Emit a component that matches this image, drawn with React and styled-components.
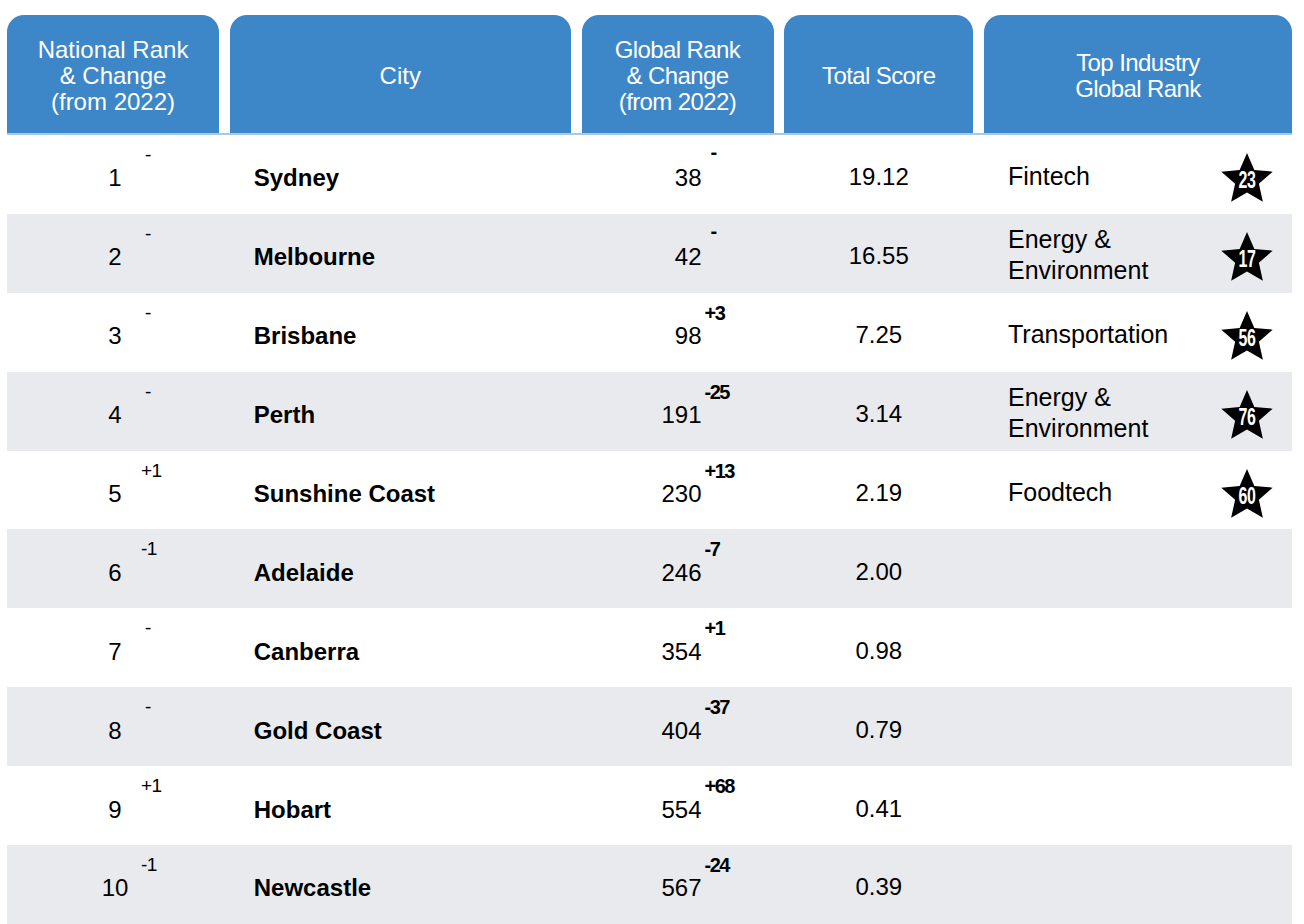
import React from "react";
import styled, { createGlobalStyle } from "styled-components";

const GlobalStyle = createGlobalStyle`
  body {
    margin: 0;
    padding: 15px 12px 0 7px;
    background: #fff;
    font-family: "Liberation Sans", Arial, sans-serif;
    color: #000;
  }
`;

const cols = "212px 341px 192px 189px 308px";

const Table = styled.div`
  width: 1285px;
`;
const HeadRow = styled.div`
  display: grid;
  grid-template-columns: ${cols};
  column-gap: 10.75px;
  border-bottom: 2px solid #a9c8e6;
`;
const HeadCell = styled.div`
  background: #3d86c8;
  color: #fff;
  height: 118px;
  border-radius: 17px 17px 0 0;
  display: flex;
  align-items: center;
  justify-content: center;
  text-align: center;
  font-size: 24px;
  line-height: 26px;
  letter-spacing: ${(p) => (p.tight ? "-0.6px" : "0")};
  padding-top: 4px;
  box-sizing: border-box;
`;
const Row = styled.div`
  display: grid;
  grid-template-columns: ${cols};
  column-gap: 10.75px;
  height: 78.9px;
  background: ${(p) => (p.shade ? "#e8eaee" : "#fff")};
`;
const Cell = styled.div`
  display: flex;
  align-items: center;
  font-size: 24px;
  position: relative;
`;
const RankCell = styled(Cell)`
  padding-left: 86px;
`;
const RankNum = styled.span`
  width: 44px;
  text-align: center;
  padding-top: 8px;
`;
const Sup = styled.span`
  align-self: flex-start;
  margin-top: ${(p) => (p.dash ? 6 : 9)}px;
  margin-left: ${(p) => p.gap || 6}px;
  font-size: ${(p) => (p.bold ? 20 : 19)}px;
  font-weight: ${(p) => (p.bold ? 700 : 400)};
  letter-spacing: ${(p) => (p.bold ? "-1.5px" : "-0.5px")};
`;
const City = styled(Cell)`
  padding-left: 24px;
  padding-top: 8px;
  font-weight: 700;
`;
const GlobalCell = styled(Cell)`
  padding-left: 36px;
`;
const GlobalNum = styled.span`
  width: 84px;
  text-align: right;
  padding-top: 8px;
`;
const Score = styled(Cell)`
  justify-content: center;
  padding-top: 6px;
`;
const Industry = styled(Cell)`
  justify-content: space-between;
  padding-left: 24px;
  padding-right: 18px;
  padding-top: 4px;
  font-size: 25px;
  line-height: 31px;
`;
const StarWrap = styled.div`
  position: relative;
  width: 54px;
  height: 52px;
  flex-shrink: 0;
  margin-top: 2px;
`;
const StarNum = styled.span`
  position: absolute;
  inset: 0;
  display: flex;
  align-items: center;
  justify-content: center;
  padding-top: 5px;
  color: #fff;
  font-weight: 700;
  font-size: 21px;
  letter-spacing: -0.5px;
  transform: scale(0.76, 1.12);
`;

const starPoints = (() => {
  const pts = [];
  for (let i = 0; i < 10; i++) {
    const r = i % 2 === 0 ? 27 : 12.5;
    const a = (Math.PI / 5) * i - Math.PI / 2;
    pts.push(`${(27 + r * Math.cos(a)).toFixed(2)},${(29 + r * Math.sin(a)).toFixed(2)}`);
  }
  return pts.join(" ");
})();

const Star = ({ n }) => (
  <StarWrap>
    <svg width="54" height="52" viewBox="0 0 54 52">
      <polygon points={starPoints} fill="#000" />
    </svg>
    <StarNum>{n}</StarNum>
  </StarWrap>
);

const data = [
  ["1", "-", "Sydney", "38", "-", "19.12", "Fintech", "23"],
  ["2", "-", "Melbourne", "42", "-", "16.55", "Energy &\nEnvironment", "17"],
  ["3", "-", "Brisbane", "98", "+3", "7.25", "Transportation", "56"],
  ["4", "-", "Perth", "191", "-25", "3.14", "Energy &\nEnvironment", "76"],
  ["5", "+1", "Sunshine Coast", "230", "+13", "2.19", "Foodtech", "60"],
  ["6", "-1", "Adelaide", "246", "-7", "2.00"],
  ["7", "-", "Canberra", "354", "+1", "0.98"],
  ["8", "-", "Gold Coast", "404", "-37", "0.79"],
  ["9", "+1", "Hobart", "554", "+68", "0.41"],
  ["10", "-1", "Newcastle", "567", "-24", "0.39"],
];

const App = () => {
  return (
    <Table>
      <GlobalStyle />
      <HeadRow>
        <HeadCell>
          National Rank
          <br />& Change
          <br />
          (from 2022)
        </HeadCell>
        <HeadCell>City</HeadCell>
        <HeadCell tight>
          Global Rank
          <br />& Change
          <br />
          (from 2022)
        </HeadCell>
        <HeadCell tight>Total Score</HeadCell>
        <HeadCell tight>
          Top Industry
          <br />
          Global Rank
        </HeadCell>
      </HeadRow>
      {data.map((d, i) => (
        <Row key={d[0]} shade={i % 2 === 1}>
          <RankCell>
            <RankNum>{d[0]}</RankNum>
            <Sup gap={d[1] === "-" ? 8 : 4}>{d[1]}</Sup>
          </RankCell>
          <City>{d[2]}</City>
          <GlobalCell>
            <GlobalNum>{d[3]}</GlobalNum>
            <Sup bold dash={d[4] === "-"} gap={d[4] === "-" ? 9 : 3}>
              {d[4]}
            </Sup>
          </GlobalCell>
          <Score>{d[5]}</Score>
          <Industry>
            {d[6] ? (
              <>
                <span style={{ whiteSpace: "pre-line" }}>{d[6]}</span>
                <Star n={d[7]} />
              </>
            ) : null}
          </Industry>
        </Row>
      ))}
    </Table>
  );
};

export default App;
